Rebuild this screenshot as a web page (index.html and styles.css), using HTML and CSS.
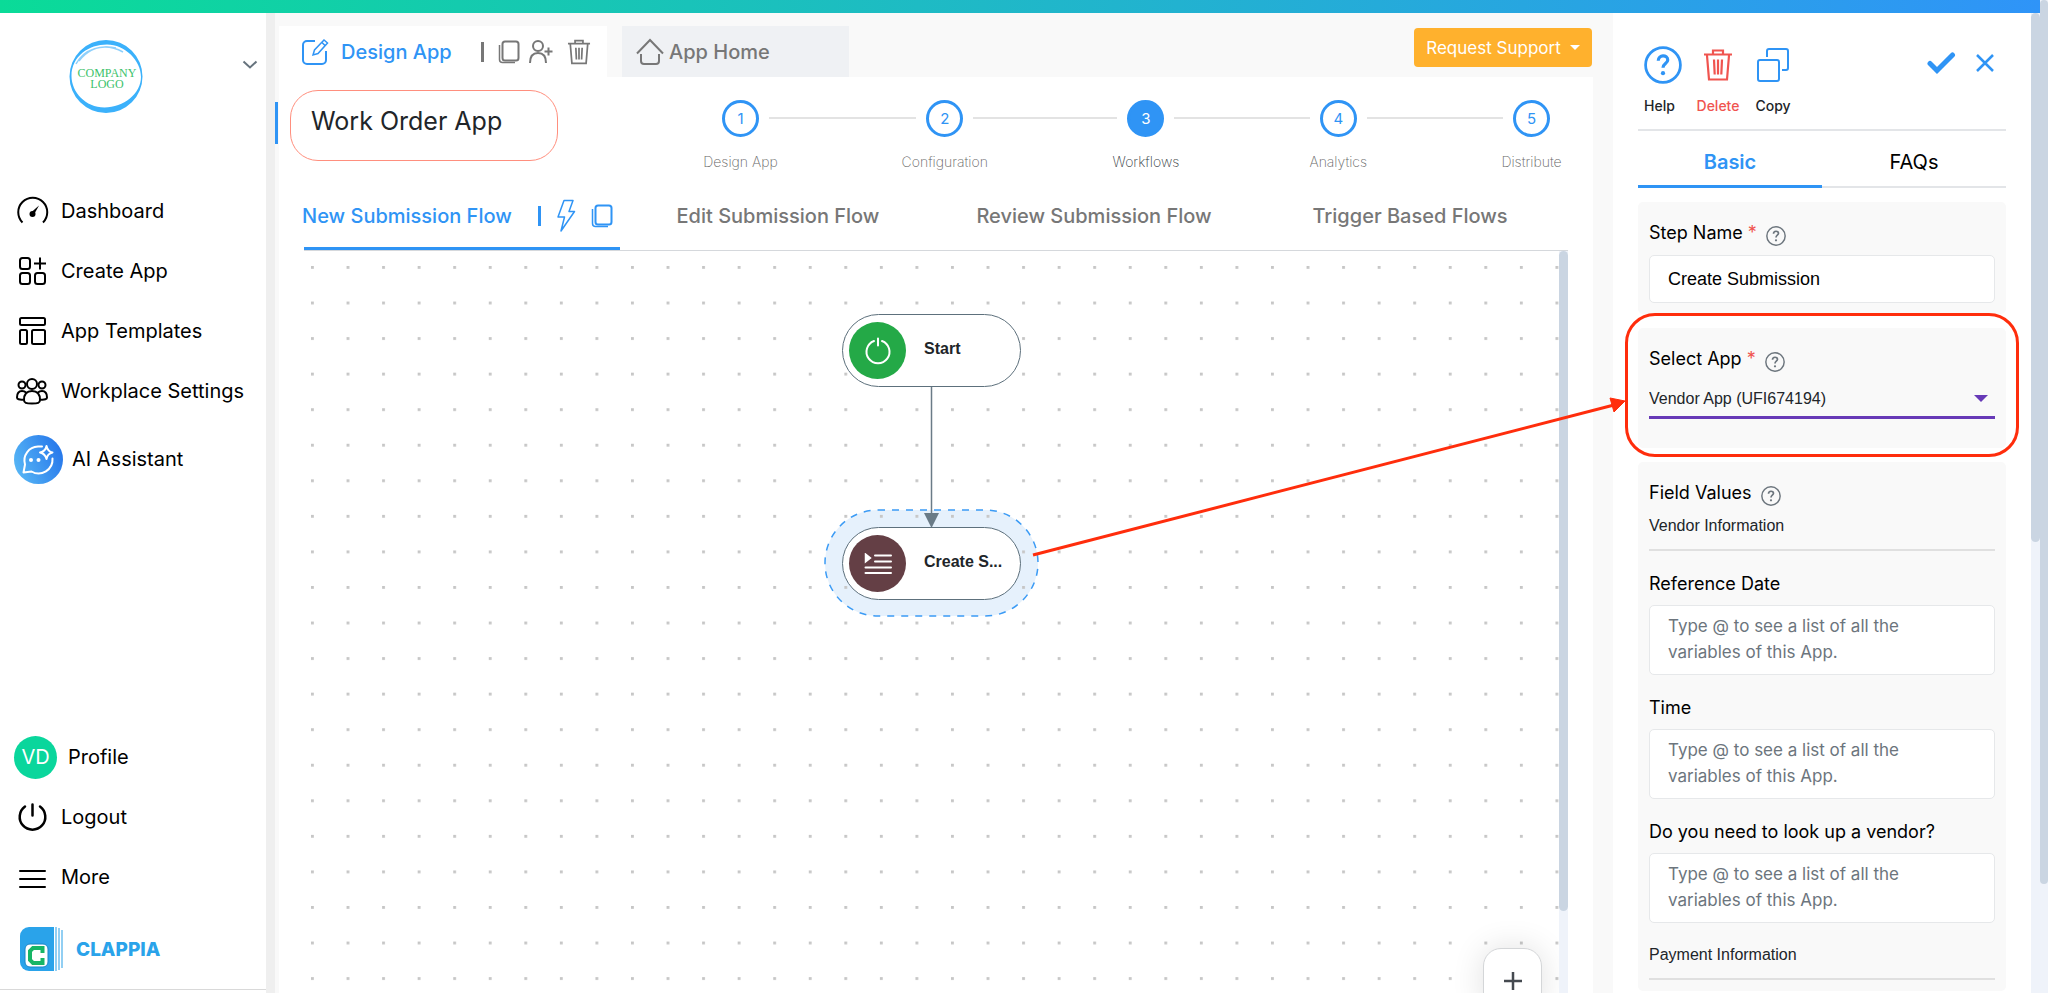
FILE: index.html
```html
<!DOCTYPE html>
<html lang="en">
<head>
    <meta charset="UTF-8">
    <meta name="viewport" content="width=device-width, initial-scale=1.0">
    <title>Work Order App - Workflows</title>
    <link rel="stylesheet" href="styles.css">
</head>
<body>
    <svg class="defs" width="0" height="0" aria-hidden="true">
        <symbol id="i-pages" viewBox="0 0 22 24">
            <rect x="4.500" y="1.500" width="16" height="19" rx="2.500" fill="none" stroke="currentColor" stroke-width="2"/>
            <path d="M1.500 5v14.500a3 3 0 0 0 3 3H17" fill="none" stroke="currentColor" stroke-width="1.500"/>
        </symbol>
        <symbol id="i-trash" viewBox="0 0 30 33">
            <path d="M1 6h28M10 5V2h10v3M4 7l2 24h18l2-24M11 11l.7 15M15 11v15M19 11l-.7 15" fill="none" stroke="currentColor" stroke-width="2.200"/>
        </symbol>
        <symbol id="i-help" viewBox="0 0 36 36">
            <circle cx="18" cy="18" r="16.500" fill="none" stroke="currentColor" stroke-width="2.600"/>
            <path d="M13.500 14c0-6 9-6 9-.8 0 3.300-4.500 3.500-4.500 7.300" fill="none" stroke="currentColor" stroke-width="3"/>
            <circle cx="18" cy="25.800" r="2" fill="currentColor"/>
        </symbol>
    </svg>

    <div class="app">
        <div class="topbar"></div>
        <div class="shell">
            <aside class="sidebar">
                <div class="company">
                    <svg class="company-logo" viewBox="0 0 74 74" width="74" height="74">
                        <path fill="#3bb1fb" fill-rule="evenodd" d="M37 0a36.500 36.500 0 1 1 0 73a36.500 36.500 0 1 1 0-73zM38 4.500C20 4.500 2.500 16 2.500 36c0 16 14 31.500 33 31.500s36.500-14 36.500-30.500S56 4.500 38 4.500z"/>
                        <path d="M7 24C14 10 34 1 54 12M10 21C20 8 34 5 47 8" fill="none" stroke="#8fd0fb" stroke-width="1.500"/>
                        <text x="38" y="37" class="logo-text">COMPANY</text>
                        <text x="38" y="48" class="logo-text">LOGO</text>
                    </svg>
                    <button class="chevron" aria-label="Switch workplace">
                        <svg width="16" height="10" viewBox="0 0 16 10"><path d="M1.500 1.500L8 7.500l6.500-6" fill="none" stroke="#66737d" stroke-width="2"/></svg>
                    </button>
                </div>
                <nav class="menu">
                    <a href="#">
                        <svg class="menu-icon" viewBox="0 0 36 36"><path d="M8.500 29.500a14.500 14.500 0 1 1 20.500 0" fill="none" stroke="#000" stroke-width="2"/><circle cx="18.500" cy="21" r="3" fill="#000"/><path d="M17 19.500l8-7-5 9z" fill="#000"/></svg>
                        Dashboard
                    </a>
                    <a href="#">
                        <svg class="menu-icon" viewBox="0 0 36 36" fill="none" stroke="#000" stroke-width="2"><rect x="6" y="5" width="10" height="11" rx="2.500"/><rect x="6" y="20" width="10" height="11" rx="2.500"/><rect x="21" y="20" width="10" height="11" rx="2.500"/><path d="M26 4.500v12M20 10.500h12"/></svg>
                        Create App
                    </a>
                    <a href="#">
                        <svg class="menu-icon" viewBox="0 0 36 36" fill="none" stroke="#000" stroke-width="2"><rect x="6" y="5" width="25" height="7" rx="1.500"/><rect x="6" y="17" width="7" height="14" rx="1.500"/><rect x="18" y="17" width="13" height="14" rx="1.500"/></svg>
                        App Templates
                    </a>
                    <a href="#">
                        <svg class="menu-icon" viewBox="0 0 36 36" fill="none" stroke="#000" stroke-width="2"><circle cx="18" cy="11" r="5"/><circle cx="8" cy="12" r="3.500"/><circle cx="28" cy="12" r="3.500"/><path d="M10 27c0-6 3-9 8-9s8 3 8 9c0 3-2 3.500-8 3.500S10 30 10 27zM10 26.500c-5 .5-7-.5-7-2 0-4.500 2-6.500 5-6.500 2 0 3 .5 4 1.500M26 26.500c5 .5 7-.5 7-2 0-4.500-2-6.500-5-6.500-2 0-3 .5-4 1.500"/></svg>
                        Workplace Settings
                    </a>
                    <a href="#" class="assistant">
                        <svg width="49" height="49" viewBox="0 0 49 49">
                            <defs><linearGradient id="ai" x1="0" y1=".6" x2="1" y2=".2"><stop offset="0" stop-color="#55b4f5"/><stop offset="1" stop-color="#2474ea"/></linearGradient></defs>
                            <circle cx="24.500" cy="24.500" r="24.500" fill="url(#ai)"/>
                            <path d="M28 11.500h-4a14 14 0 0 0-13 18l-1.500 8 8-1a14 14 0 0 0 21-13" fill="none" stroke="#fff" stroke-width="2" stroke-linejoin="round" stroke-linecap="round"/>
                            <path d="M32.500 11q1.500 6 6 6.500q-5 1-6 6.500q-1.500-5.500-6.500-6.500q5.500-1 6.500-6.500z" fill="none" stroke="#fff" stroke-width="2" stroke-linejoin="round"/>
                            <circle cx="17" cy="25" r="2" fill="#fff"/><circle cx="24.500" cy="25" r="2" fill="#fff"/>
                        </svg>
                        AI Assistant
                    </a>
                </nav>
                <nav class="menu menu-bottom">
                    <a href="#"><span class="avatar">VD</span>Profile</a>
                    <a href="#">
                        <svg class="menu-icon" viewBox="0 0 36 36" fill="none" stroke="#000" stroke-width="2.500" stroke-linecap="round"><path d="M11 7.500a12.800 12.800 0 1 0 15 0M18.500 5.500v11"/></svg>
                        Logout
                    </a>
                    <a href="#">
                        <svg class="menu-icon" viewBox="0 0 36 36" stroke="#000" stroke-width="2" stroke-linecap="round"><path d="M6 12h25M6 20h25M6 28h25"/></svg>
                        More
                    </a>
                    <a href="#" class="brand">
                        <svg width="45" height="44" viewBox="0 0 45 44">
                            <path d="M9 0h25v44H9a9 9 0 0 1-9-9V9a9 9 0 0 1 9-9z" fill="#2aa3ea"/>
                            <path d="M36 0v44M39 1v42M42 3v38" stroke="#6fc0f0" stroke-width="1.500"/>
                            <rect x="5" y="17" width="23" height="23" rx="5" fill="#fff" stroke="#1b85c8" stroke-width="1"/>
                            <path d="M22.500 26v-5H13l-3 3v9l3 3h9.500v-5" fill="none" stroke="#17b566" stroke-width="4"/>
                        </svg>
                        CLAPPIA
                    </a>
                </nav>
            </aside>

            <main class="main">
                <div class="tabstrip">
                    <div class="app-tab active">
                        <svg width="28" height="28" viewBox="0 0 28 28" fill="none" stroke="currentColor" stroke-width="2"><path d="M14 3H6a4 4 0 0 0-4 4v15a4 4 0 0 0 4 4h15a4 4 0 0 0 4-4v-9"/><path d="M12 17l1.500-5L23 2l3.500 3L17 15.500zM21 4.500l3 3" stroke-width="1.500"/></svg>
                        <a href="#">Design App</a>
                        <div class="tab-tools">
                            <span class="bar"></span>
                            <button aria-label="Duplicate app"><svg width="22" height="24"><use href="#i-pages"/></svg></button>
                            <button aria-label="Add user"><svg width="26" height="26" viewBox="0 0 26 26" fill="none" stroke="currentColor" stroke-width="2"><circle cx="10" cy="7" r="5"/><path d="M2 24c0-7 3-10 8-10s8 3 8 10M16.500 12.500h8M20.500 8.500v8"/></svg></button>
                            <button class="delete" aria-label="Delete app"><svg width="24" height="26"><use href="#i-trash"/></svg></button>
                        </div>
                    </div>
                    <a href="#" class="app-tab">
                        <svg width="28" height="28" viewBox="0 0 28 28" fill="none" stroke="currentColor" stroke-width="2"><path d="M1 15.500L14 2l13 13.500M5 16v7a3 3 0 0 0 3 3h12a3 3 0 0 0 3-3v-7"/></svg>
                        App Home
                    </a>
                    <button class="support">Request Support <span class="caret"></span></button>
                </div>

                <section class="editor">
                    <header class="editor-head">
                        <h1>Work Order App</h1>
                        <ol class="steps">
                            <li><span class="num">1</span><span class="name">Design App</span></li>
                            <li class="line l1"></li>
                            <li><span class="num">2</span><span class="name">Configuration</span></li>
                            <li class="line l2"></li>
                            <li class="current"><span class="num">3</span><span class="name">Workflows</span></li>
                            <li class="line l3"></li>
                            <li><span class="num">4</span><span class="name">Analytics</span></li>
                            <li class="line l4"></li>
                            <li><span class="num">5</span><span class="name">Distribute</span></li>
                        </ol>
                    </header>

                    <nav class="flows">
                        <div class="flow active">
                            <a href="#">New Submission Flow</a>
                            <span class="bar"></span>
                            <button aria-label="Run flow"><svg width="20" height="34" viewBox="0 0 20 34"><path d="M8 1.500h9l-4 11h5.500L5 32l3.500-14H2z" fill="none" stroke="currentColor" stroke-width="1.500" stroke-linejoin="round"/></svg></button>
                            <button aria-label="Copy flow"><svg width="22" height="24"><use href="#i-pages"/></svg></button>
                        </div>
                        <div class="flow"><a href="#">Edit Submission Flow</a></div>
                        <div class="flow"><a href="#">Review Submission Flow</a></div>
                        <div class="flow"><a href="#">Trigger Based Flows</a></div>
                    </nav>

                    <div class="canvas">
                        <svg class="canvas-bg" width="100%" height="100%">
                            <defs>
                                <pattern id="dots" width="20" height="20" patternUnits="userSpaceOnUse" patternTransform="translate(7 15) scale(1.7778)">
                                    <rect width="1.600" height="1.600" fill="#c6c6c6"/>
                                </pattern>
                            </defs>
                            <rect x="521" y="259" width="213" height="106" rx="53" fill="#e6f1fc" stroke="#3b9bf5" stroke-width="1.500" stroke-dasharray="7 7"/>
                            <rect width="100%" height="100%" fill="url(#dots)"/>
                            <path d="M627.500 136v128" stroke="#6a7b87" stroke-width="1.500"/>
                            <path d="M620 262h15l-7.500 15z" fill="#6a7b87"/>
                        </svg>
                        <div class="node node-start">
                            <span class="node-icon green"><svg width="28" height="28" viewBox="0 0 28 28" fill="none" stroke="#fff" stroke-width="2" stroke-linecap="round"><path d="M10 4a11.500 11.500 0 1 0 8 0M14 1.500v7"/></svg></span>
                            <span class="node-name">Start</span>
                        </div>
                        <div class="node node-create">
                            <span class="node-icon brown"><svg width="28" height="22" viewBox="0 0 28 22" fill="none" stroke="#fff" stroke-width="2" stroke-linecap="round"><path d="M1.500 1v8l5-4z" fill="#fff" stroke-width="1.500"/><path d="M11 2.500h16M11 8.500h16M1.500 14.500H27M1.500 20H27"/></svg></span>
                            <span class="node-name">Create S...</span>
                        </div>
                        <button class="zoom-in" aria-label="Zoom in"><svg width="18" height="18" viewBox="0 0 18 18"><path d="M9 0v18M0 9h18" stroke="#454a50" stroke-width="2.500"/></svg></button>
                        <div class="scroll canvas-scroll"><div class="thumb"></div></div>
                    </div>
                </section>
            </main>

            <aside class="panel">
                <div class="panel-tools">
                    <button class="tool tool-help"><svg width="38" height="38"><use href="#i-help"/></svg>Help</button>
                    <button class="tool tool-delete"><svg width="30" height="38"><use href="#i-trash"/></svg>Delete</button>
                    <button class="tool tool-copy"><svg width="34" height="38" viewBox="0 0 34 38" fill="none" stroke="currentColor" stroke-width="2"><rect x="2" y="14" width="21" height="21" rx="2"/><path d="M11 11V5a2 2 0 0 1 2-2h17a2 2 0 0 1 2 2v17a2 2 0 0 1-2 2h-4"/></svg>Copy</button>
                    <div class="panel-actions">
                        <button aria-label="Save"><svg width="30" height="24" viewBox="0 0 30 24"><path d="M4 12.500l7 7L26.500 4" fill="none" stroke="currentColor" stroke-width="5" stroke-linecap="round"/></svg></button>
                        <button aria-label="Close"><svg width="18" height="18" viewBox="0 0 18 18"><path d="M1 1l16 16M17 1L1 17" stroke="currentColor" stroke-width="2.500"/></svg></button>
                    </div>
                </div>
                <nav class="panel-tabs">
                    <a href="#" class="active">Basic</a>
                    <a href="#">FAQs</a>
                </nav>

                <div class="card">
                    <div class="field-head"><label for="stepName">Step Name <span class="req">*</span></label><svg width="20" height="20"><use href="#i-help"/></svg></div>
                    <input type="text" id="stepName" value="Create Submission">
                </div>

                <div class="card card-select">
                    <div class="field-head"><label for="selectApp">Select App <span class="req">*</span></label><svg width="20" height="20"><use href="#i-help"/></svg></div>
                    <div class="select-wrap">
                        <select id="selectApp"><option>Vendor App (UFI674194)</option></select>
                    </div>
                    <div class="callout"></div>
                    <svg class="callout-arrow" width="594" height="160" viewBox="0 0 594 160">
                        <path d="M1 158L582 8" stroke="#ff2d0c" stroke-width="3"/>
                        <path d="M578 1l15 3-11 11z" fill="#ff2d0c" stroke="#ff2d0c"/>
                    </svg>
                </div>

                <div class="card card-fields">
                    <div class="field-head"><span>Field Values</span><svg width="20" height="20"><use href="#i-help"/></svg></div>
                    <h2>Vendor Information</h2>
                    <label for="refDate">Reference Date</label>
                    <textarea id="refDate" placeholder="Type @ to see a list of all the variables of this App."></textarea>
                    <label for="time">Time</label>
                    <textarea id="time" placeholder="Type @ to see a list of all the variables of this App."></textarea>
                    <label for="lookup">Do you need to look up a vendor?</label>
                    <textarea id="lookup" placeholder="Type @ to see a list of all the variables of this App."></textarea>
                    <h2 class="next">Payment Information</h2>
                </div>
            </aside>
            <div class="scroll panel-scroll"><div class="thumb"></div></div>
        </div>
    </div>
    <div class="scroll page-scroll"><div class="thumb"></div></div>
</body>
</html>
```
FILE: styles.css
```css
* {
    box-sizing: border-box;
}
body {
    margin: 0;
    height: 100vh;
    display: flex;
    overflow: hidden;
    font-family: Inter, "Liberation Sans", sans-serif;
    font-size: 20px;
    color: #000;
    background: #fff;
}
a {
    color: inherit;
    text-decoration: none;
}
button {
    padding: 0;
    border: none;
    background: none;
    color: inherit;
    font-family: inherit;
    cursor: pointer;
}
svg {
    display: block;
    flex: none;
}
.defs {
    position: absolute;
}
.app {
    flex: 1;
    min-width: 0;
    display: flex;
    flex-direction: column;
}
.topbar {
    flex: none;
    height: 13px;
    background: linear-gradient(90deg, #0adb98, #1ebbc4 45%, #2f94f8);
}
.shell {
    flex: 1;
    min-height: 0;
    display: flex;
    overflow: hidden;
}

/* scrollbars */
.scroll {
    flex: none;
    width: 9px;
    background: #eff3fa;
}
.thumb {
    background: #cad5e2;
    border-radius: 5px;
}
.page-scroll {
    width: 8px;
}
.page-scroll .thumb {
    height: 89%;
}
.panel-scroll .thumb {
    height: 54%;
}

/* sidebar */
.sidebar {
    flex: none;
    width: 266px;
    display: flex;
    flex-direction: column;
    background: #fff;
}
.company {
    display: flex;
    align-items: flex-start;
    justify-content: space-between;
    height: 168px;
    padding: 27px 8px 0 69px;
}
.logo-text {
    font-family: "Liberation Serif", serif;
    font-size: 12px;
    fill: #3cc26b;
    text-anchor: middle;
}
.chevron {
    margin-top: 20px;
}
.menu {
    display: flex;
    flex-direction: column;
    padding-left: 14px;
}
.menu a {
    display: flex;
    align-items: center;
    gap: 11px;
    height: 60px;
}
.menu-icon {
    width: 36px;
    height: 36px;
}
.menu .assistant {
    gap: 9px;
    height: 76px;
}
.menu-bottom {
    margin-top: auto;
    margin-bottom: 3px;
    border-bottom: 1px solid #d9d9d9;
}
.avatar {
    width: 43px;
    height: 43px;
    border-radius: 50%;
    background: #0ad69c;
    color: #fff;
    line-height: 43px;
    text-align: center;
}
.menu .brand {
    height: 82px;
    padding: 2px 0 0 6px;
    font-size: 19px;
    font-weight: 800;
    color: #2aa3ea;
}

/* main area */
.main {
    flex: 1;
    min-width: 0;
    display: flex;
    flex-direction: column;
    padding: 0 20px 0 13px;
    background: linear-gradient(90deg, #efefef 9px, #f9f9f9 9px);
}
.tabstrip {
    display: flex;
    align-items: flex-end;
    height: 64px;
}
.app-tab {
    display: flex;
    align-items: center;
    gap: 5px;
    width: 227px;
    height: 51px;
    padding-left: 14px;
    background: #eff1f4;
    color: #777;
    font-weight: 500;
}
.app-tab.active {
    gap: 12px;
    width: 328px;
    margin-right: 15px;
    padding-left: 22px;
    background: #fff;
    color: #2f94f5;
}
.tab-tools {
    display: flex;
    align-items: center;
    gap: 8px;
    margin-left: 17px;
    color: #777;
}
.tab-tools .delete {
    margin-left: 5px;
}
.bar {
    width: 3px;
    height: 20px;
    margin-right: 6px;
    background: currentColor;
}
.support {
    display: flex;
    align-items: center;
    justify-content: center;
    gap: 9px;
    width: 178px;
    height: 39px;
    margin: 0 1px 10px auto;
    border-radius: 4px;
    background: #ffb12d;
    color: #fff;
    font-size: 17px;
}
.caret {
    border: 5px solid transparent;
    border-top-color: #fff;
    border-bottom: none;
}
.editor {
    flex: 1;
    min-height: 0;
    display: flex;
    flex-direction: column;
    padding: 13px 25px 0;
    background: #fff;
}
.editor-head {
    display: flex;
    align-items: flex-start;
    height: 82px;
    margin-left: -14px;
}
h1 {
    flex: none;
    width: 268px;
    height: 71px;
    margin: 0;
    padding: 14px 20px;
    border: 1px solid #ff8f7e;
    border-radius: 28px;
    font-size: 25px;
    font-weight: 400;
    line-height: 32px;
    color: #212529;
}
h1::before {
    content: "";
    position: absolute;
    left: 275px;
    top: 102px;
    width: 3px;
    height: 42px;
    background: #2f94f5;
}
.steps {
    flex: 1;
    display: flex;
    margin: 10px 18px 0 164px;
    padding: 0;
    list-style: none;
}
.steps li {
    flex: none;
    width: 37px;
    display: flex;
    flex-direction: column;
    align-items: center;
    gap: 15px;
}
.num {
    width: 37px;
    height: 37px;
    border: 3px solid #2f94f5;
    border-radius: 50%;
    color: #2f94f5;
    font-size: 15px;
    line-height: 31px;
    text-align: center;
}
.current .num {
    background: #2f94f5;
    color: #fff;
}
.name {
    font-size: 14px;
    font-weight: 200;
    line-height: 20px;
    color: #666;
    white-space: nowrap;
}
.current .name {
    color: #343a40;
}
.steps .line {
    height: 2px;
    margin: 17px 10px 0;
    background: #e3e3e3;
}
.steps .l1 {
    flex: 148;
}
.steps .l2 {
    flex: 145;
}
.steps .l3 {
    flex: 136;
}
.steps .l4 {
    flex: 137;
}
.flows {
    flex: none;
    display: grid;
    grid-template-columns: repeat(4, 1fr);
    height: 71px;
    margin-top: 8px;
    padding: 0;
    border-bottom: 1px solid #d5d8dc;
}
.flow {
    display: flex;
    align-items: center;
    justify-content: center;
    padding-top: 1px;
    color: #777;
    font-weight: 500;
    white-space: nowrap;
}
.flow.active {
    justify-content: flex-start;
    padding-top: 4px;
    border-bottom: 3px solid #2f94f5;
    color: #2f94f5;
}
.flow.active a {
    margin-left: -2px;
}
.flow.active .bar {
    margin: 0 15px 0 26px;
}
.flow.active button + button {
    margin-left: 15px;
}

/* workflow canvas */
.canvas {
    flex: 1;
    min-height: 0;
    position: relative;
    overflow: hidden;
}
.canvas-bg {
    position: absolute;
}
.node {
    position: absolute;
    left: 538px;
    width: 179px;
    height: 73px;
    display: flex;
    align-items: center;
    gap: 18px;
    padding-left: 6px;
    border: 1px solid #5d707c;
    border-radius: 37px;
    background: #fff;
}
.node-start {
    top: 63px;
}
.node-create {
    top: 276px;
}
.node-icon {
    width: 57px;
    height: 57px;
    display: flex;
    align-items: center;
    justify-content: center;
    border-radius: 50%;
}
.green {
    background: #24a947;
}
.brown {
    background: #643f45;
}
.node-name {
    margin-bottom: 4px;
    font-family: "Liberation Sans", sans-serif;
    font-size: 16px;
    font-weight: 700;
    color: #212529;
}
.zoom-in {
    position: absolute;
    right: 26px;
    bottom: -20px;
    width: 59px;
    height: 65px;
    display: flex;
    align-items: center;
    justify-content: center;
    border: 1px solid #d4d6d8;
    border-radius: 18px;
    background: #fff;
    box-shadow: 0 0 32px rgba(0, 0, 0, 0.12);
}
.canvas-scroll {
    position: absolute;
    right: 0;
    top: 0;
    bottom: 0;
}
.canvas-scroll .thumb {
    height: 89%;
}

/* step settings panel */
.panel {
    flex: none;
    width: 418px;
    padding: 0 25px;
    background: #fff;
}
.panel-tools {
    display: flex;
    align-items: flex-start;
    height: 118px;
    padding: 33px 12px 0 0;
    border-bottom: 2px solid #e3e5e8;
}
.tool {
    display: flex;
    flex-direction: column;
    align-items: center;
    gap: 12px;
    width: 54px;
    font-size: 14px;
    font-weight: 500;
    line-height: 20px;
    color: #212529;
}
.tool-help {
    width: 52px;
    padding-left: 6px;
    align-items: flex-start;
}
.tool-help svg,
.tool-copy svg,
.panel-actions {
    color: #2f94f5;
}
.tool-delete {
    width: 56px;
    color: #f0544f;
}
.panel-actions {
    display: flex;
    align-items: center;
    gap: 20px;
    margin: 5px 0 0 auto;
}
.panel-tabs {
    display: grid;
    grid-template-columns: 1fr 1fr;
    height: 57px;
    border-bottom: 2px solid #e3e5e8;
}
.panel-tabs a {
    height: 57px;
    padding-top: 19px;
    line-height: 24px;
    text-align: center;
}
.panel-tabs .active {
    border-bottom: 3px solid #2f94f5;
    color: #2f94f5;
    font-weight: 600;
}
.card {
    position: relative;
    margin-top: 14px;
    padding: 18px 11px 11px;
    border-radius: 5px;
    background: #f9f9f9;
    font-size: 18px;
    line-height: 26px;
}
.field-head {
    display: flex;
    align-items: flex-end;
    gap: 9px;
    margin-bottom: 9px;
    color: #000;
}
.field-head svg {
    color: #6c757d;
}
.req {
    color: #f0544f;
}
input,
textarea {
    display: block;
    width: 100%;
    border: 1px solid #e6e8ea;
    border-radius: 5px;
    background: #fff;
    color: #000;
}
input {
    height: 48px;
    padding: 0 18px;
    font-family: "Liberation Sans", sans-serif;
    font-size: 18px;
}
textarea {
    height: 70px;
    padding: 7px 18px;
    resize: none;
    overflow: hidden;
    font-family: inherit;
    font-size: 17px;
    line-height: 26px;
}
textarea::placeholder {
    color: #6c757d;
}
.card-select {
    padding-bottom: 29px;
}
.select-wrap {
    position: relative;
}
select {
    display: block;
    width: 100%;
    height: 38px;
    appearance: none;
    border: none;
    border-bottom: 3px solid #673ab7;
    background: none;
    font-family: "Liberation Sans", sans-serif;
    font-size: 16px;
    color: #212529;
}
.select-wrap::after {
    content: "";
    position: absolute;
    right: 7px;
    top: 14px;
    border: 7px solid transparent;
    border-top-color: #673ab7;
    border-bottom: none;
}
.callout {
    position: absolute;
    inset: -15px -13px -9px;
    border: 3px solid #ff2d0c;
    border-radius: 30px;
    pointer-events: none;
}
.callout-arrow {
    position: absolute;
    right: calc(100% + 12px);
    top: 69px;
    pointer-events: none;
}
.card h2 {
    margin: -1px 0 20px;
    padding-bottom: 11px;
    border-bottom: 2px solid #e0e0e0;
    font-family: "Liberation Sans", sans-serif;
    font-size: 16px;
    font-weight: 400;
    line-height: 24px;
    color: #212529;
}
.card-fields > label {
    display: block;
    margin: 20px 0 8px;
}
.card h2.next {
    margin: 20px 0 0;
}
```
